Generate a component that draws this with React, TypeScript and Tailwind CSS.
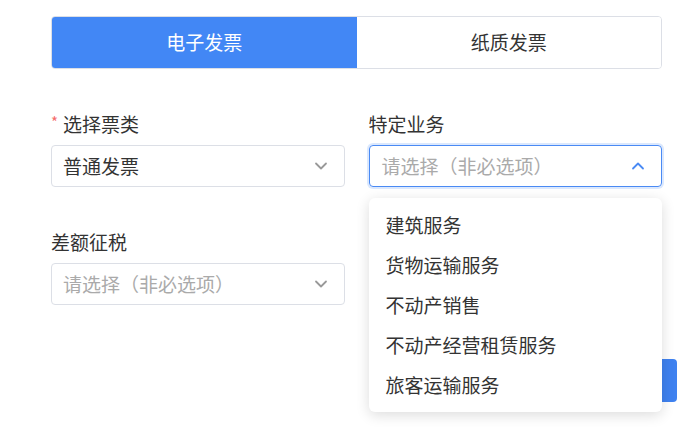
const FONT = { fontFamily: '"Noto Sans CJK SC", "Noto Sans", sans-serif' };

const OPTIONS = ["建筑服务", "货物运输服务", "不动产销售", "不动产经营租赁服务", "旅客运输服务"];

function Chevron({ up, className }: { up?: boolean; className?: string }) {
  return (
    <svg width="14" height="14" viewBox="0 0 14 14" className={className} fill="none">
      <path
        d={up ? "M2 9.5 L7 4.5 L12 9.5" : "M2 4.5 L7 9.5 L12 4.5"}
        stroke="currentColor"
        strokeWidth="1.8"
        strokeLinecap="round"
        strokeLinejoin="round"
      />
    </svg>
  );
}

function Label({ children, required }: { children: React.ReactNode; required?: boolean }) {
  return (
    <div className="h-[22px] mb-[10px] flex items-center text-[19px] leading-[22px] text-[#333]">
      {required && <span className="text-[#f56c6c] text-[15px] mr-[5px] -mt-1">*</span>}
      {children}
    </div>
  );
}

export default function App() {
  return (
    <div className="w-[700px] h-[429px] bg-white overflow-hidden" style={FONT}>
      <div className="pt-4 pl-[51px] pr-[38px]">
        {/* invoice type tabs */}
        <div className="flex h-[53px] rounded-[4px] border border-[#dcdfe6] overflow-hidden">
          <div className="flex-1 flex items-center justify-center bg-[#4287f5] text-white text-[19px]">
            电子发票
          </div>
          <div className="flex-1 flex items-center justify-center bg-white text-[#333] text-[19px]">
            纸质发票
          </div>
        </div>

        <div className="grid grid-cols-2 gap-x-6 mt-[44px]">
          <div>
            <Label required>选择票类</Label>
            <div className="h-[42px] flex items-center justify-between pl-[11px] pr-[16px] border border-[#dcdfe6] rounded-[4px] text-[19px] text-[#333]">
              <span>普通发票</span>
              <Chevron className="text-[#999]" />
            </div>
          </div>
          <div className="relative">
            <Label>特定业务</Label>
            <div className="h-[42px] flex items-center justify-between pl-3 pr-[16px] border border-[#4a8af4] ring-2 ring-[#4a8af4]/20 rounded-[4px] text-[19px] text-[#aaa]">
              <span>请选择（非必选项）</span>
              <Chevron up className="text-[#4a8af4]" />
            </div>
            {/* dropdown */}
            <div className="absolute left-0 right-0 top-[85px] z-10 bg-white rounded-[6px] shadow-[0_3px_14px_rgba(0,0,0,0.14)] py-[7px]">
              {OPTIONS.map((o) => (
                <div key={o} className="h-10 flex items-center px-[17px] text-[19px] text-[#333]">
                  {o}
                </div>
              ))}
            </div>
          </div>
          <div className="mt-[44px]">
            <Label>差额征税</Label>
            <div className="h-[42px] flex items-center justify-between pl-[11px] pr-[16px] border border-[#dcdfe6] rounded-[4px] text-[19px] text-[#aaa]">
              <span>请选择（非必选项）</span>
              <Chevron className="text-[#999]" />
            </div>
          </div>
        </div>
      </div>

      <div className="flex justify-end pr-[23px] mt-[54px]">
        <button className="h-[43px] w-[120px] rounded-[4px] bg-[#3f82f0] text-white text-[16px]">
          下一步
        </button>
      </div>
    </div>
  );
}
